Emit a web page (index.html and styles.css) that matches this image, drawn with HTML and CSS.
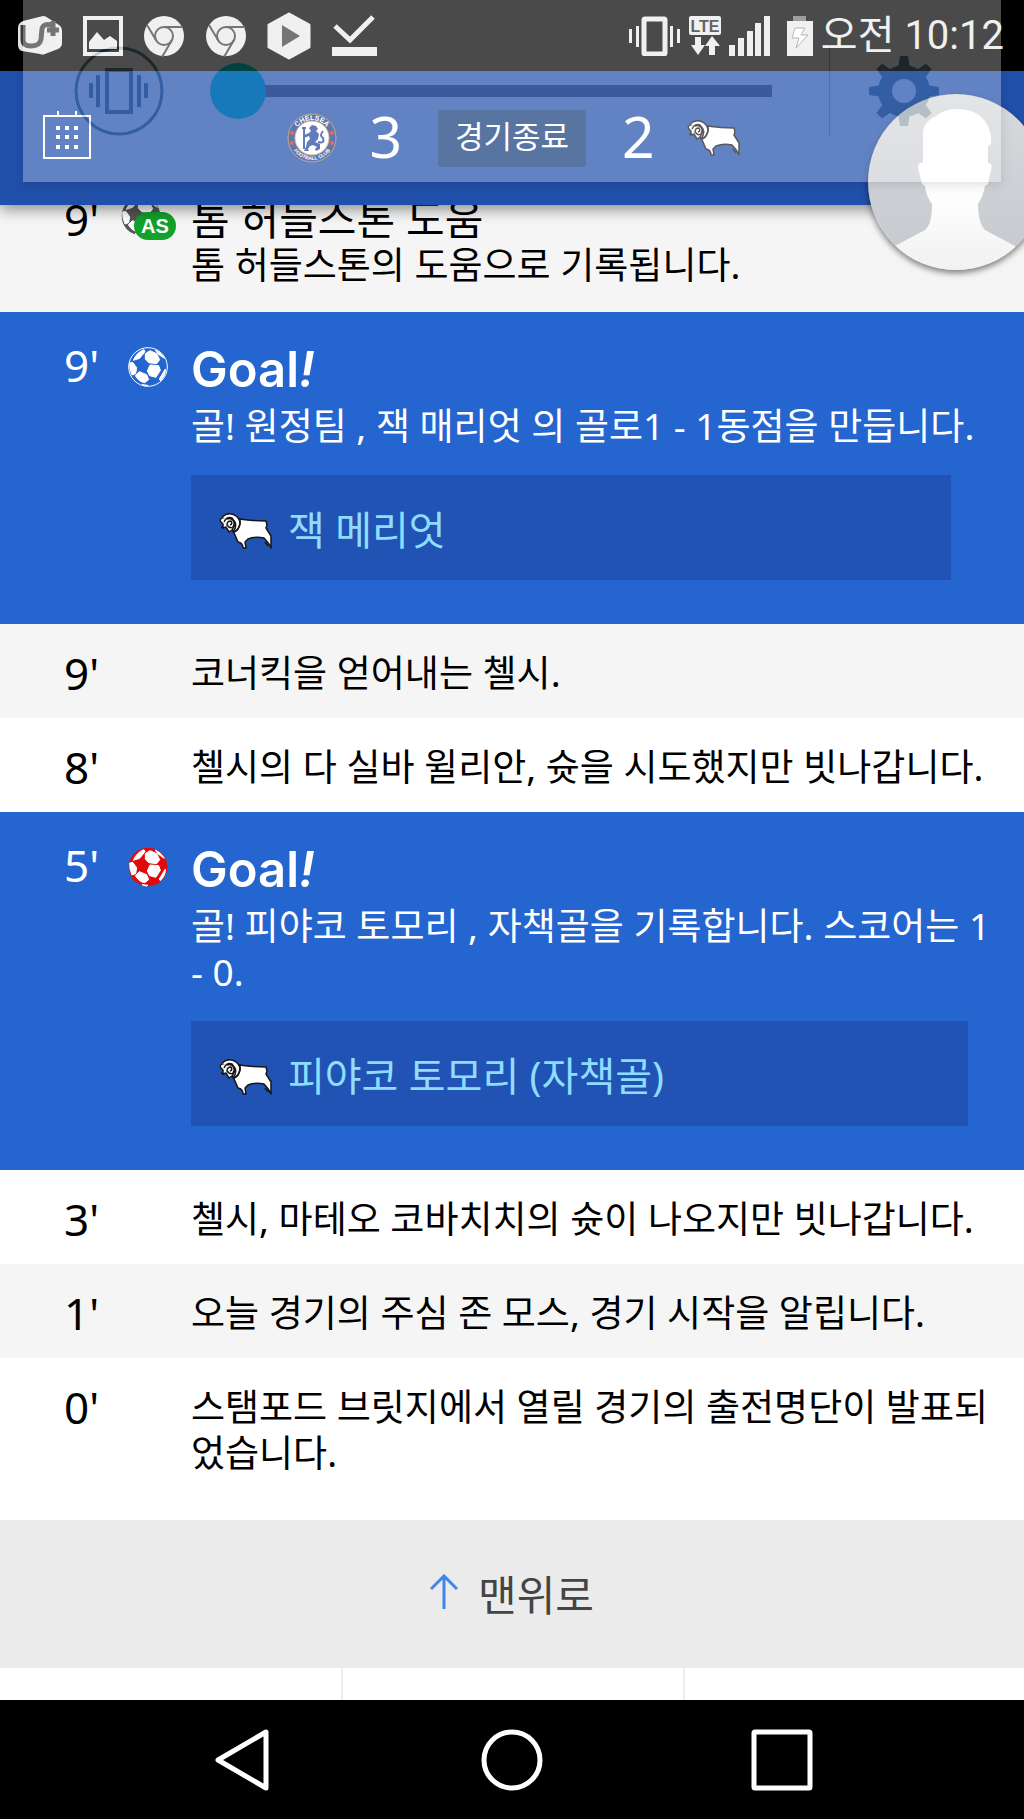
FILE: index.html
```
<!DOCTYPE html>
<html lang="ko">
<head>
<meta charset="utf-8">
<meta name="viewport" content="width=device-width, initial-scale=1">
<title>첼시 3 : 2 더비 카운티</title>
<link rel="stylesheet" href="styles.css">
</head>
<body>
<svg class="defs" aria-hidden="true">
  <symbol id="ball" viewBox="0 0 120 120">
    <circle class="ball-base" cx="60" cy="60" r="58"/>
    <g fill="#fff" stroke="#fff" stroke-width="3" stroke-linejoin="round">
      <path d="M52 20 66 11 86 20 95 38 86 50 62 47 52 36Z"/>
      <path d="M66 54 92 56 97 70 84 91 65 86 58 72Z"/>
      <path d="M16 40Q26 16 48 8L51 14 35 34Z"/>
      <path d="M5 48 14 46 26 62 23 80 12 84Q4 68 5 48Z"/>
      <path d="M22 86 34 74 56 83 62 98 50 107Q32 104 22 86Z"/>
      <path d="M82 9Q100 17 109 34L90 21Z"/>
      <path d="M94 96 112 66Q114 84 97 101Z"/>
      <path d="M42 113 60 115 54 117Z"/>
    </g>
  </symbol>
  <symbol id="ram" viewBox="0 0 53 37">
    <g fill="#fff" stroke="#161616" stroke-width="1.5" stroke-linejoin="round">
      <path d="M20 6Q34 8 47 8L48 12 47 15 52 23 52 35Q50 30 45 25 36 23 29 26L26 29 27 35 24 35Q24 30 19 29L16 22 13 16Z"/>
      <path d="M3 5Q0 7 2 9L4 11 4 15 7 14 10 19 13 17 16 11 12 3Z"/>
      <path d="M3 4Q10-2 17 3 23 8 20 14 18 19 14 19 18 14 16 9 12 4 8 6"/>
      <path d="M5 9Q8 3 13 5 17 9 14 14 11 16 8 12 8 8 12 8 14 11 11 12M14 19Q19 18 21 11L21 5M46 29 49 33M2 14 5 15" fill="none"/>
    </g>
  </symbol>
  <symbol id="chrome" viewBox="0 0 42 42">
    <circle cx="21" cy="21" r="20" fill="#ebebeb"/>
    <g fill="none" stroke="#3c3c3c" stroke-width="2">
      <circle cx="21" cy="21" r="9"/>
      <path d="M21 12H40M13 25 4 10M29 25 19 42"/>
    </g>
  </symbol>
</svg>

<div class="screen">
  <div class="statusbar">
    <div class="notices">
      <svg width="46" height="40" viewBox="0 0 46 40"><path d="M6 5 26 0Q29 0 31 2L42 9Q45 11 45 15V27Q45 31 41 33L28 38Q26 39 23 38L5 35Q1 34 1 28V12Q1 7 6 5Z" fill="#ebebeb"/><path d="M6 9V24Q6 30 14 30 23 30 24 23L25 13Q26 7 35 9M36 5V20M30 14H42" fill="none" stroke="#3c3c3c" stroke-width="5"/></svg>
      <svg width="40" height="40" viewBox="0 0 40 40"><path d="M2 2H38V38H2Z" fill="none" stroke="#ebebeb" stroke-width="4"/><path d="M6 33V26L14 16 21 24 27 20 34 25V33Z" fill="#ebebeb"/></svg>
      <svg width="42" height="42"><use href="#chrome"/></svg>
      <svg width="42" height="42"><use href="#chrome"/></svg>
      <svg width="44" height="48" viewBox="0 0 44 48"><path d="M22 2 42 13V35L22 46 2 35V13Z" fill="#ebebeb" stroke="#ebebeb" stroke-width="3" stroke-linejoin="round"/><path d="M15 13V35L33 24Z" fill="#3c3c3c"/></svg>
      <svg width="46" height="42" viewBox="0 0 46 42"><path d="M4 11 19 25 42 2" fill="none" stroke="#ebebeb" stroke-width="5"/><path d="M1 32H46V41H1Z" fill="#ebebeb"/></svg>
    </div>
    <div class="system">
      <svg width="53" height="40" viewBox="0 0 53 40"><rect x="16" y="3" width="21" height="35" rx="1" fill="none" stroke="#ebebeb" stroke-width="5"/><path d="M1 13H4V27H1ZM8 10H11V31H8ZM42 10H45V31H42ZM49 13H52V27H49Z" fill="#ebebeb"/></svg>
      <svg width="32" height="40" viewBox="0 0 32 40"><rect width="32" height="19" rx="2" fill="#ebebeb"/><text x="16" y="16" text-anchor="middle" class="lte">LTE</text><path d="M6 21H12V29H16L9 39 2 29H6ZM20 39H26V30H31L23 20 16 30H20Z" fill="#ebebeb"/></svg>
      <svg width="42" height="40" viewBox="0 0 42 40"><path d="M0 29H6V40H0ZM9 22H15V40H9ZM18 15H24V40H18ZM26 7H32V40H26ZM35 0H41V40H35Z" fill="#ebebeb"/></svg>
      <svg width="42" height="40" viewBox="0 0 42 40"><path d="M14 0H27V5H14Z" fill="#777"/><path d="M8 5H34V40H8Z" fill="#ebebeb"/><path d="M16 12H26L22 19H29L17 32 20 22H13Z" fill="#fff" stroke="#999"/></svg>
      <time class="clock">오전 10:12</time>
    </div>
  </div>

  <header class="scorebar">
    <button class="icon-button" aria-label="경기 일정"><svg width="48" height="48" viewBox="0 0 48 48"><path d="M1 5H47V47H1ZM15 0V5M33 0V5" fill="none" stroke="#fff" stroke-width="2"/><path d="M13 15H17V19H13ZM22 15H26V19H22ZM31 15H35V19H31ZM13 24H17V28H13ZM22 24H26V28H22ZM31 24H35V28H31ZM13 34H17V38H13ZM22 34H26V38H22ZM31 34H35V38H31Z" fill="#fff"/></svg></button>
    <div class="score">
      <svg width="50" height="50" viewBox="0 0 50 50" role="img" aria-label="첼시">
        <defs><path id="arc-top" d="M7 25A18 18 0 0 1 43 25"/><path id="arc-bottom" d="M3 25A22 22 0 0 0 47 25"/></defs>
        <circle cx="25" cy="25" r="24" fill="#1d3f8f" stroke="#a58a50"/>
        <circle cx="25" cy="25" r="17" fill="#fff" stroke="#c9ab66"/>
        <text class="crest-name"><textPath href="#arc-top" startOffset="50%" text-anchor="middle">CHELSEA</textPath></text>
        <text class="crest-club"><textPath href="#arc-bottom" startOffset="50%" text-anchor="middle">FOOTBALL CLUB</textPath></text>
        <g fill="#f02030"><circle cx="5" cy="20" r="2"/><circle cx="5" cy="30" r="2"/><circle cx="45" cy="20" r="2"/><circle cx="45" cy="30" r="2"/></g>
        <path d="M22 15 25 12 29 13 31 16 29 18 32 21 31 26 28 29 33 31 33 36 29 38 28 36 30 34 26 32 23 33 21 36 22 38 17 38 19 34 20 29 23 26 22 23 17 25 17 22 22 20 24 18Z" fill="#2145a0"/>
        <path d="M17 14V36M15 15H19M31 29Q38 31 36 25 32 23 36 18" fill="none" stroke="#2145a0" stroke-width="2"/>
      </svg>
      <strong class="goals">3</strong>
      <button class="state">경기종료</button>
      <strong class="goals">2</strong>
      <svg width="53" height="37" role="img" aria-label="더비 카운티"><use href="#ram"/></svg>
    </div>
  </header>

  <main>
    <ol class="feed">
      <li class="event tinted scrolled">
        <span class="minute">9'</span>
        <span class="mark assist">
          <svg class="gray" width="40" height="40"><use href="#ball"/></svg>
          <b class="badge">AS</b>
        </span>
        <div class="body"><h2 class="title">톰 허들스톤 도움</h2><p>톰 허들스톤의 도움으로 기록됩니다.</p></div>
      </li>
      <li class="event goal">
        <span class="minute">9'</span>
        <span class="mark"><svg class="blue" width="40" height="40"><use href="#ball"/></svg></span>
        <div class="body"><h2 class="shout">Goal<i>!</i></h2><p>골! 원정팀 , 잭 매리엇 의 골로1 - 1동점을 만듭니다.</p>
          <a class="scorer" href="#"><svg width="53" height="37"><use href="#ram"/></svg>잭 메리엇</a></div>
      </li>
      <li class="event tinted"><span class="minute">9'</span><p class="body">코너킥을 얻어내는 첼시.</p></li>
      <li class="event"><span class="minute">8'</span><p class="body">첼시의 다 실바 윌리안, 슛을 시도했지만 빗나갑니다.</p></li>
      <li class="event goal">
        <span class="minute">5'</span>
        <span class="mark"><svg class="red" width="40" height="40"><use href="#ball"/></svg></span>
        <div class="body"><h2 class="shout">Goal<i>!</i></h2><p>골! 피야코 토모리 , 자책골을 기록합니다. 스코어는 1 - 0.</p>
          <a class="scorer" href="#"><svg width="53" height="37"><use href="#ram"/></svg>피야코 토모리 (자책골)</a></div>
      </li>
      <li class="event"><span class="minute">3'</span><p class="body">첼시, 마테오 코바치치의 슛이 나오지만 빗나갑니다.</p></li>
      <li class="event tinted"><span class="minute">1'</span><p class="body">오늘 경기의 주심 존 모스, 경기 시작을 알립니다.</p></li>
      <li class="event last"><span class="minute">0'</span><p class="body">스탬포드 브릿지에서 열릴 경기의 출전명단이 발표되었습니다.</p></li>
    </ol>
    <button class="to-top"><svg width="28" height="36" viewBox="0 0 28 36"><path d="M14 35V2M1 15 14 2 27 15" fill="none" stroke="#4284ee" stroke-width="3"/></svg>맨위로</button>
    <div class="tabs"><span></span><span></span><span></span></div>
  </main>

  <nav class="navbar">
    <button aria-label="뒤로"><svg width="56" height="64" viewBox="0 0 56 64"><path d="M52 4V60L4 32Z" fill="none" stroke="#fff" stroke-width="5" stroke-linejoin="round"/></svg></button>
    <button aria-label="홈"><svg width="64" height="64" viewBox="0 0 64 64"><circle cx="32" cy="32" r="28" fill="none" stroke="#fff" stroke-width="5"/></svg></button>
    <button aria-label="최근 앱"><svg width="64" height="64" viewBox="0 0 64 64"><rect x="4" y="4" width="56" height="56" rx="1" fill="none" stroke="#fff" stroke-width="5"/></svg></button>
  </nav>

  <!-- floating chat head -->
  <button class="avatar" aria-label="대화">
    <svg width="176" height="176" viewBox="0 0 176 176"><defs><clipPath id="disc"><circle cx="88" cy="88" r="88"/></clipPath><linearGradient id="sky" x2="0" y2="1"><stop offset="0" stop-color="#d8dadd"/><stop offset="1" stop-color="#c5c8ce"/></linearGradient><linearGradient id="skin" x2="0" y2="1"><stop offset=".5" stop-color="#fff"/><stop offset="1" stop-color="#f1f1f1"/></linearGradient></defs>
    <g clip-path="url(#disc)"><path d="M0 0H176V176H0Z" fill="url(#sky)"/><path d="M55 69V42Q54 28 68 22 76 15 88 15 110 15 119 30 124 40 123 50L120 52V69Q125 69 123 76L120 90 117 92Q115 103 110 110 110 129 117 136L147 152V176H27V152L57 136Q64 130 64 110 58 102 57 92L54 90 50 74Q50 68 55 69Z" fill="url(#skin)"/></g></svg>
  </button>

  <!-- fading system volume panel -->
  <section class="volume" aria-label="음량">
    <svg width="90" height="90" viewBox="0 0 90 90"><g fill="none" stroke="#648396"><circle cx="45" cy="45" r="43" stroke-width="3"/><path d="M33 24H57V66H33Z" stroke-width="4"/><path d="M24 29V61M65 29V61M17 37V52M72 37V52" stroke-width="4"/></g></svg>
    <input class="slider" type="range" min="0" max="15" value="0" aria-label="벨소리 음량">
    <button class="settings" aria-label="설정"><svg width="70" height="70" viewBox="-35 -35 70 70"><g fill="#648396"><path d="M-4-35H4L6-22H-6ZM-4 35H4L6 22H-6Z"/><path d="M-4-35H4L6-22H-6ZM-4 35H4L6 22H-6Z" transform="rotate(90)"/><path d="M-4-35H4L6-22H-6ZM-4 35H4L6 22H-6Z" transform="rotate(45)"/><path d="M-4-35H4L6-22H-6ZM-4 35H4L6 22H-6Z" transform="rotate(135)"/><path fill-rule="evenodd" d="M0-26A26 26 0 1 1 0 26A26 26 0 1 1 0-26ZM0-12A12 12 0 1 0 0 12A12 12 0 1 0 0-12Z"/></g></svg></button>
  </section>
</div>
</body>
</html>
```
FILE: styles.css
```
* { box-sizing: border-box; margin: 0; padding: 0; }
body {
  font-family: "Noto Sans", "Noto Sans CJK KR", sans-serif;
  background: #fff;
  color: #000;
}
button { border: 0; background: none; font: inherit; color: inherit; }
a { color: inherit; text-decoration: none; }
svg { display: block; flex: none; }
.defs { position: absolute; width: 0; height: 0; }
.screen { position: relative; overflow: hidden; }

/* system status bar */
.statusbar {
  display: flex;
  justify-content: space-between;
  align-items: center;
  height: 71px;
  padding: 0 20px 0 17px;
  background: #000;
  color: #ebebeb;
}
.notices { display: flex; align-items: center; gap: 20px; }
.system { display: flex; align-items: center; }
.system svg { margin-right: 8px; }
.system svg:nth-child(4) { margin: 0; }
.lte { font: bold 16px "Liberation Sans", sans-serif; fill: #222; }
.clock { font: 40px/48px Roboto, "Noto Sans CJK KR", sans-serif; white-space: nowrap; }

/* score header */
.scorebar {
  position: relative;
  z-index: 1;
  display: flex;
  align-items: center;
  justify-content: center;
  height: 134px;
  background: #2150ab;
  color: #fff;
  box-shadow: 0 4px 14px rgba(0, 0, 0, .45);
}
.icon-button { position: absolute; left: 43px; top: 40px; }
.score { display: flex; align-items: center; gap: 32px; padding-left: 3px; }
.goals { padding-bottom: 4px; font-size: 57px; line-height: 60px; font-weight: 400; }
.state {
  width: 148px;
  height: 57px;
  margin: 0 4px;
  padding-bottom: 4px;
  border-radius: 3px;
  background: #143c7c;
  font-size: 31px;
  line-height: 40px;
}
.crest-name { font: bold 7px "Liberation Sans", sans-serif; fill: #fff; }
.crest-club { font: bold 5px "Liberation Sans", sans-serif; fill: #fff; }

/* commentary feed */
.feed { list-style: none; }
.event {
  display: grid;
  grid-template-columns: 57px 70px minmax(0, 1fr);
  padding: 26px 32px 22px 64px;
  font-size: 37px;
  line-height: 46px;
}
.event.tinted { background: #f5f5f5; }
.event.scrolled { margin-top: -35px; }
.event.goal { padding-top: 30px; padding-bottom: 44px; background: #2565d0; color: #fff; }
.event.last { padding-bottom: 44px; }
.minute { font-size: 44px; }
.body { grid-column: 3; width: fit-content; }
.mark { position: relative; padding: 5px 0 0 7px; }
.assist { padding: 0; }
.badge {
  position: absolute;
  left: 13px;
  top: 16px;
  width: 42px;
  height: 28px;
  border-radius: 14px;
  background: #13a02b;
  color: #fff;
  font: bold 20px/28px "Liberation Sans", sans-serif;
  text-align: center;
}
.gray { fill: #555; }
.blue { fill: #2565d0; stroke: #fff; stroke-width: 3px; }
.red { fill: #e00a0a; }
.title { font-size: 42px; line-height: 46px; font-weight: 400; }
.title + p { padding-bottom: 2px; }
.shout { margin-bottom: 5px; font: 600 49px/56px Inter, sans-serif; }
.scorer {
  display: flex;
  align-items: center;
  gap: 16px;
  width: 97%;
  height: 105px;
  margin-top: 26px;
  padding: 4px 30px 0 28px;
  background: #2053b3;
  color: #8fdcff;
  font-size: 40px;
}
.scorer svg { margin-top: 4px; }

/* footer actions */
.to-top {
  display: flex;
  align-items: center;
  justify-content: center;
  gap: 20px;
  width: 100%;
  height: 148px;
  padding-bottom: 4px;
  background: #ebebeb;
  color: #444;
  font-size: 42px;
}
.tabs { display: grid; grid-template-columns: repeat(3, 1fr); height: 32px; }
.tabs span + span { border-left: 2px solid #eee; }
.navbar {
  display: grid;
  grid-template-columns: 80px 80px 80px;
  justify-content: center;
  justify-items: center;
  align-items: center;
  gap: 190px;
  height: 119px;
  background: #000;
}

/* overlays */
.avatar {
  position: absolute;
  z-index: 2;
  top: 94px;
  right: -20px;
  border-radius: 50%;
  box-shadow: 0 3px 6px rgba(0, 0, 0, .5);
}
.volume {
  position: absolute;
  z-index: 3;
  top: 0;
  left: 23px;
  right: 23px;
  display: flex;
  align-items: center;
  height: 182px;
  padding-left: 51px;
  background: #fff;
  opacity: .29;
  box-shadow: 0 3px 10px rgba(0, 0, 0, .4);
}
.slider {
  appearance: none;
  flex: 1;
  height: 56px;
  margin: 0 57px 0 46px;
  background: linear-gradient(#7c7275, #7c7275) right center / calc(100% - 40px) 12px no-repeat;
}
.slider::-webkit-slider-thumb {
  appearance: none;
  width: 56px;
  height: 56px;
  border-radius: 50%;
  background: #00dcdc;
}
.settings { display: flex; padding: 10px 62px 10px 39px; border-left: 1px solid #bbb; }
```
